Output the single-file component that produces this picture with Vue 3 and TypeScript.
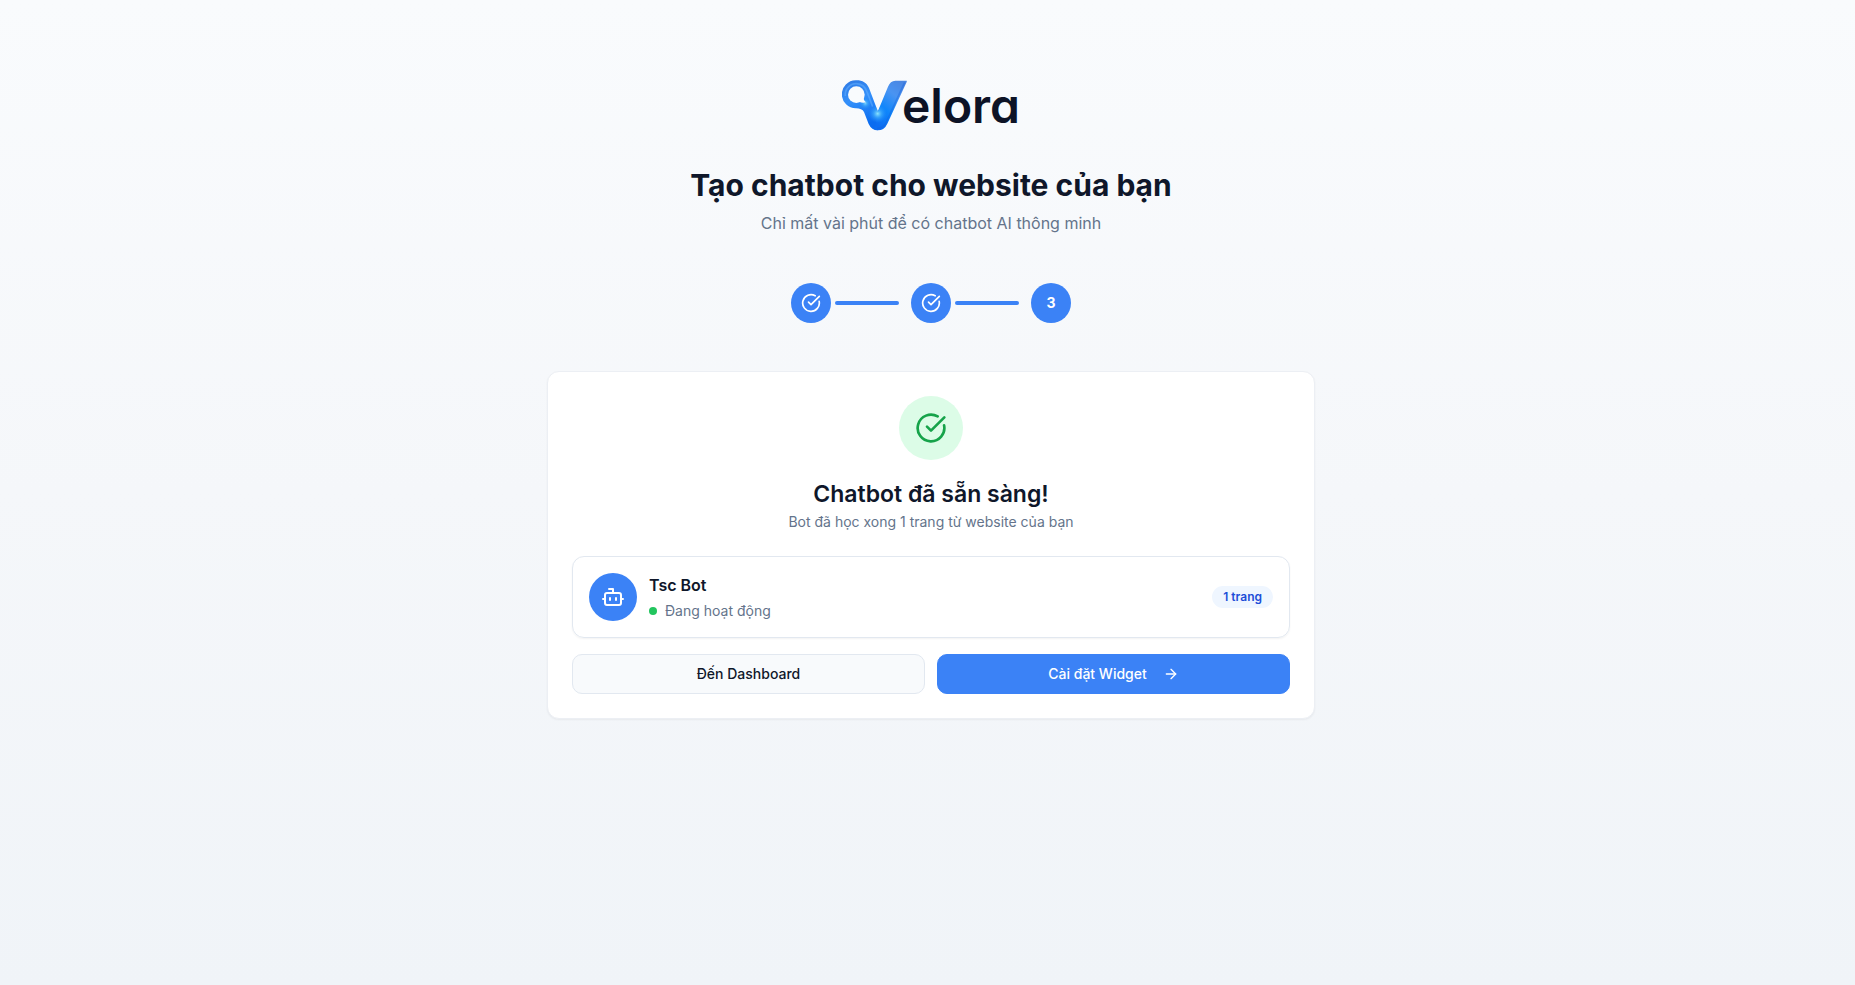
<script setup lang="ts">
interface Step {
  id: number
  done: boolean
}

const steps: Step[] = [
  { id: 1, done: true },
  { id: 2, done: true },
  { id: 3, done: false },
]

const bot = { name: 'Tsc Bot', status: 'Đang hoạt động', pages: 1 }
</script>

<template>
  <main class="page">
    <div class="container">
      <header class="header">
        <div class="logo">
          <svg class="logo-mark" viewBox="0 0 198 156" aria-hidden="true">
            <defs>
              <linearGradient id="mark" x1="0" y1="0" x2="0.3" y2="1">
                <stop offset="0" stop-color="#2f78e2" />
                <stop offset="0.45" stop-color="#3490fa" />
                <stop offset="1" stop-color="#0a6cf0" />
              </linearGradient>
              <linearGradient id="arm" x1="0.8" y1="0" x2="0.3" y2="1">
                <stop offset="0" stop-color="#4a86e2" />
                <stop offset="0.3" stop-color="#4a94f2" />
                <stop offset="0.65" stop-color="#0f86fb" />
                <stop offset="1" stop-color="#0c6df2" />
              </linearGradient>
              <radialGradient id="glow">
                <stop offset="0" stop-color="#8ee4fc" />
                <stop offset="0.45" stop-color="#45b4fd" stop-opacity="0.6" />
                <stop offset="1" stop-color="#2090fd" stop-opacity="0" />
              </radialGradient>
              <clipPath id="shape">
                <path d="M41 1C60 0 74 8 81 24L108 95L138 20Q145 2 160 2H194Q195 3 194 6L136 131Q127 151 107 151Q89 151 80 132L66 96Q60 85 42 85A42 42 0 0 1 41 1Z" />
              </clipPath>
            </defs>
            <path fill="url(#mark)" d="M41 1C60 0 74 8 81 24L108 95L107 151Q89 151 80 132L66 96Q60 85 42 85A42 42 0 0 1 41 1Z" />
            <path fill="url(#arm)" d="M138 20Q145 2 160 2H194Q195 3 194 6L136 131Q127 151 107 151L98 149L107 95Z" />
            <g clip-path="url(#shape)">
              <circle cx="107" cy="101" r="28" fill="url(#glow)" />
              <circle cx="70" cy="70" r="18" fill="url(#glow)" opacity="0.8" />
              <path d="M10 48A33 33 0 0 1 43 11Q68 12 76 38L92 80" fill="none" stroke="#67b3ff" stroke-width="5" opacity="0.5" />
              <path d="M188 7L132 128Q123 145 106 145" fill="none" stroke="#155fd9" stroke-width="5" opacity="0.35" />
            </g>
            <circle cx="43" cy="44" r="25" fill="#f9fbfd" />
            <path fill="#f9fbfd" d="M65 50Q64 61 72 67Q61 70 51 65Z" />
          </svg>
          <span class="logo-text">elora</span>
        </div>
        <h1>Tạo chatbot cho website của bạn</h1>
        <p>Chỉ mất vài phút để có chatbot AI thông minh</p>
      </header>

      <ol class="steps">
        <li v-for="(step, index) in steps" :key="step.id" class="step">
          <span class="step-dot">
            <svg v-if="step.done" class="icon" width="20" height="20" viewBox="0 0 24 24" role="img" aria-label="Xong">
              <path d="M21.801 10A10 10 0 1 1 17 3.335" />
              <path d="m9 11 3 3L22 4" />
            </svg>
            <template v-else>{{ step.id }}</template>
          </span>
          <span v-if="index < steps.length - 1" class="step-line"></span>
        </li>
      </ol>

      <section class="card">
        <div class="success">
          <svg class="icon" width="32" height="32" viewBox="0 0 24 24" aria-hidden="true">
            <path d="M21.801 10A10 10 0 1 1 17 3.335" />
            <path d="m9 11 3 3L22 4" />
          </svg>
        </div>
        <h2>Chatbot đã sẵn sàng!</h2>
        <p class="description">Bot đã học xong {{ bot.pages }} trang từ website của bạn</p>

        <div class="bot">
          <div class="avatar">
            <svg class="icon" width="24" height="24" viewBox="0 0 24 24" aria-hidden="true">
              <path d="M12 8V4H8" />
              <rect width="16" height="12" x="4" y="8" rx="2" />
              <path d="M2 14h2M20 14h2M15 13v2M9 13v2" />
            </svg>
          </div>
          <div class="bot-info">
            <h3>{{ bot.name }}</h3>
            <div class="status"><span class="status-dot"></span>{{ bot.status }}</div>
          </div>
          <span class="badge">{{ bot.pages }} trang</span>
        </div>

        <div class="actions">
          <button type="button" class="button secondary">Đến Dashboard</button>
          <button type="button" class="button primary">
            Cài đặt Widget
            <svg class="icon" width="16" height="16" viewBox="0 0 24 24" aria-hidden="true">
              <path d="M5 12h14" />
              <path d="m12 5 7 7-7 7" />
            </svg>
          </button>
        </div>
      </section>
    </div>
  </main>
</template>

<style>
body {
  margin: 0;
}
</style>

<style scoped>
.page {
  box-sizing: border-box;
  min-height: 100vh;
  padding: 72px 16px 48px 23px;
  background: linear-gradient(to bottom, #f9fbfd, #f5f7fa 50%, #f0f4f8);
  color: #0f172a;
  font-family: Inter, "Noto Sans", sans-serif;
  font-size: 16px;
  line-height: 24px;
}

.container {
  max-width: 768px;
  margin: 0 auto;
}

h1,
h2,
h3,
p {
  margin: 0;
}

.icon {
  flex: none;
  fill: none;
  stroke: currentColor;
  stroke-width: 2;
  stroke-linecap: round;
  stroke-linejoin: round;
}

.header {
  display: flex;
  flex-direction: column;
  align-items: center;
  text-align: center;
}

.logo {
  display: flex;
  align-items: center;
  height: 67px;
  margin-bottom: 28px;
}

.logo-mark {
  width: 66px;
  height: 52px;
}

.logo-text {
  margin-left: -6px;
  color: #0d1326;
  font-size: 48px;
  font-weight: 600;
  line-height: 56px;
  font-feature-settings: "cv11";
}

h1 {
  font-size: 30px;
  font-weight: 700;
  line-height: 36px;
}

.header p {
  margin-top: 8px;
  color: #64748b;
}

.steps {
  display: flex;
  justify-content: center;
  gap: 12px;
  margin: 48px 0;
  padding: 0;
  list-style: none;
}

.step {
  display: flex;
  align-items: center;
  gap: 4px;
}

.step-dot {
  display: flex;
  align-items: center;
  justify-content: center;
  width: 40px;
  height: 40px;
  border-radius: 50%;
  background: #3b82f6;
  color: #fff;
  font-size: 14px;
  font-weight: 700;
}

.step-line {
  width: 64px;
  height: 4px;
  border-radius: 2px;
  background: #3b82f6;
}

.card {
  padding: 24px;
  border: 1px solid #eceff4;
  border-radius: 12px;
  background: #fff;
  box-shadow: 0 1px 2px rgb(0 0 0 / 5%);
  text-align: center;
}

.success {
  display: flex;
  align-items: center;
  justify-content: center;
  width: 64px;
  height: 64px;
  margin: 0 auto 16px;
  border-radius: 50%;
  background: #dcfce7;
  color: #16a34a;
}

h2 {
  font-size: 23px;
  font-weight: 600;
  line-height: 36px;
}

.description {
  color: #64748b;
  font-size: 14px;
  line-height: 20px;
}

.bot {
  display: flex;
  align-items: center;
  gap: 12px;
  margin-top: 24px;
  padding: 16px;
  border: 1px solid #e2e8f0;
  border-radius: 12px;
  box-shadow: 0 1px 2px rgb(0 0 0 / 5%);
  text-align: left;
}

.avatar {
  display: flex;
  align-items: center;
  justify-content: center;
  width: 48px;
  height: 48px;
  border-radius: 50%;
  background: #3b82f6;
  color: #fff;
}

.bot-info {
  flex: 1;
}

h3 {
  font-size: 16px;
  font-weight: 600;
  line-height: 24px;
}

.status {
  display: flex;
  align-items: center;
  gap: 8px;
  margin-top: 4px;
  color: #64748b;
  font-size: 14px;
  line-height: 20px;
}

.status-dot {
  width: 8px;
  height: 8px;
  border-radius: 50%;
  background: #22c55e;
}

.badge {
  padding: 3px 11px;
  border-radius: 999px;
  background: #eff6ff;
  color: #1d4ed8;
  font-size: 12px;
  font-weight: 600;
  line-height: 16px;
}

.actions {
  display: grid;
  grid-template-columns: 1fr 1fr;
  gap: 12px;
  margin-top: 16px;
}

.button {
  display: flex;
  align-items: center;
  justify-content: center;
  gap: 16px;
  height: 40px;
  padding: 0 16px;
  border: 1px solid #e2e8f0;
  border-radius: 10px;
  background: #f8fafc;
  color: #0f172a;
  font: 500 14px/20px Inter, "Noto Sans", sans-serif;
  cursor: pointer;
}

.primary {
  border-color: #3b82f6;
  background: #3b82f6;
  color: #fff;
}
</style>
